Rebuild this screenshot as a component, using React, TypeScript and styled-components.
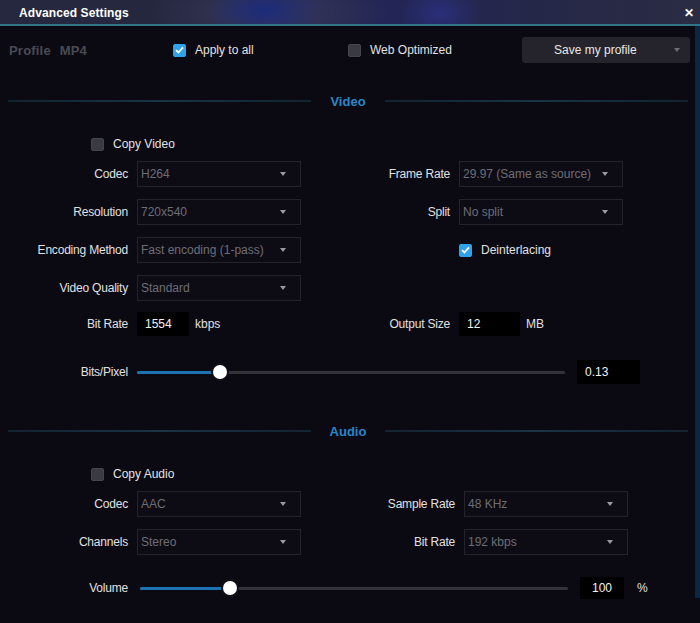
import styled, { createGlobalStyle } from 'styled-components';

const GlobalStyle = createGlobalStyle`
  html, body {
    margin: 0;
    padding: 0;
    background: #0b0a13;
  }
  * {
    box-sizing: border-box;
  }
`;

const Window = styled.div`
  width: 700px;
  height: 623px;
  display: flex;
  flex-direction: column;
  background: #0b0a13;
  font-family: "Liberation Sans", Arial, sans-serif;
  font-size: 12px;
  color: #dcdcdc;
  overflow: hidden;
`;

const TitleBar = styled.div`
  height: 26px;
  flex-shrink: 0;
  display: flex;
  align-items: center;
  justify-content: space-between;
  padding: 2px 6px 0 19px;
  border-bottom: 2px solid #2f7585;
  background:
    radial-gradient(ellipse 60px 30px at 265px 10px, #1b2a7a 0%, rgba(27, 42, 122, 0) 100%),
    radial-gradient(ellipse 120px 40px at 270px 12px, #3b3a5c 0%, rgba(59, 58, 92, 0) 100%),
    radial-gradient(ellipse 40px 30px at 440px 14px, #2a2f7a 0%, rgba(42, 47, 122, 0) 100%),
    linear-gradient(90deg, #262840 0%, #25273f 30%, #222556 55%, #262847 80%, #2a2c44 100%);
`;

const Title = styled.span`
  font-weight: bold;
  font-size: 12px;
  color: #ffffff;
  letter-spacing: 0.1px;
`;

const CloseButton = styled.span`
  font-weight: bold;
  font-size: 12px;
  color: #ffffff;
  line-height: 1;
`;

const Frame = styled.div`
  flex: 1;
  display: flex;
`;

const Content = styled.div`
  flex: 1;
  display: flex;
  flex-direction: column;
`;

const EdgeStrip = styled.div`
  width: 5px;
  margin-bottom: 25px;
  background: #0c2741;
`;

const TopBar = styled.div`
  display: flex;
  align-items: center;
  height: 26px;
  margin-top: 11px;
  padding-left: 9px;
`;

const ProfileName = styled.span`
  width: 164px;
  font-weight: bold;
  font-size: 13px;
  color: #4a4a53;
  word-spacing: 5px;
  letter-spacing: 0.2px;
`;

const CheckWrap = styled.label<{ $width?: number }>`
  display: flex;
  align-items: center;
  gap: 9px;
  width: ${p => (p.$width ? `${p.$width}px` : 'auto')};
  color: #e2e2e2;
  font-size: 12px;
`;

const Box = styled.span<{ $checked?: boolean }>`
  width: 13px;
  height: 13px;
  border-radius: 2px;
  display: inline-flex;
  align-items: center;
  justify-content: center;
  background: ${p => (p.$checked ? '#2ea3ea' : '#3a3a42')};
  border: 1px solid ${p => (p.$checked ? '#2ea3ea' : '#45454d')};
`;

const SaveButton = styled.div`
  width: 168px;
  height: 26px;
  margin-left: auto;
  margin-right: 5px;
  border-radius: 3px;
  background: #25242d;
  display: flex;
  align-items: center;
  padding: 0 10px 0 32px;
  color: #e8e8e8;
  font-size: 12px;
`;

const SaveLabel = styled.span`
  flex: 1;
`;

const Arrow = styled.span<{ $color?: string }>`
  width: 0;
  height: 0;
  border-left: 3.5px solid transparent;
  border-right: 3.5px solid transparent;
  border-top: 4px solid ${p => p.$color || '#9a9aa2'};
`;

const SectionHeader = styled.div<{ $top: number }>`
  display: flex;
  align-items: center;
  height: 20px;
  margin-top: ${p => p.$top}px;
  padding: 0 7px 0 8px;
`;

const HeaderLine = styled.span`
  flex: 1;
  height: 2px;
  background: linear-gradient(90deg, #122330 0%, #193444 50%, #122330 100%);
`;

const HeaderText = styled.span`
  margin: 0 19px;
  font-weight: bold;
  font-size: 13px;
  color: #2a86c7;
`;

const Row = styled.div<{ $top: number; $height?: number }>`
  display: flex;
  align-items: center;
  height: ${p => p.$height || 26}px;
  margin-top: ${p => p.$top}px;
`;

const Field = styled.div<{ $labelWidth: number; $width?: number }>`
  display: flex;
  align-items: center;
  width: ${p => (p.$width ? `${p.$width}px` : 'auto')};
  & > .label {
    width: ${p => p.$labelWidth}px;
    margin-right: 9px;
    text-align: right;
    color: #e0e0e0;
    white-space: nowrap;
    letter-spacing: -0.2px;
  }
`;

const Select = styled.div`
  width: 164px;
  height: 26px;
  border: 1px solid #24232c;
  background: #0d0c15;
  display: flex;
  align-items: center;
  justify-content: space-between;
  padding: 0 14px 0 3px;
  color: #6d6d75;
  font-size: 12px;
`;

const NumberBox = styled.div<{ $width: number; $height?: number; $center?: boolean }>`
  width: ${p => p.$width}px;
  height: ${p => p.$height || 24}px;
  background: #000000;
  display: flex;
  align-items: center;
  justify-content: ${p => (p.$center ? 'center' : 'flex-start')};
  padding-left: ${p => (p.$center ? 0 : 8)}px;
  color: #f2f2f2;
  font-size: 12px;
`;

const Unit = styled.span`
  margin-left: 6px;
  color: #e0e0e0;
`;

const Track = styled.div<{ $width: number; $gap: number }>`
  position: relative;
  width: ${p => p.$width}px;
  height: 3px;
  margin-left: ${p => p.$gap}px;
  margin-right: 12px;
  background: #34333b;
  border-radius: 2px;
`;

const Fill = styled.div`
  position: absolute;
  left: 0;
  top: 0;
  bottom: 0;
  background: #1d72b4;
  border-radius: 2px;
`;

const Thumb = styled.div`
  position: absolute;
  top: 50%;
  width: 14px;
  height: 14px;
  margin: -7px 0 0 -7px;
  border-radius: 50%;
  background: #ffffff;
  box-shadow: 0 0 0 2px #111018;
`;

const Percent = styled.span`
  margin-left: 13px;
  color: #e0e0e0;
`;

const Check = () => (
  <svg width="9" height="8" viewBox="0 0 9 8">
    <path d="M1 4.2 L3.4 6.5 L8 1.4" fill="none" stroke="#fff" strokeWidth="1.8" />
  </svg>
);

const CheckItem = ({ checked, label, width }: { checked?: boolean; label: string; width?: number }) => (
  <CheckWrap $width={width}>
    <Box $checked={checked}>{checked && <Check />}</Box>
    {label}
  </CheckWrap>
);

const Dropdown = ({ value }: { value: string }) => (
  <Select>
    <span>{value}</span>
    <Arrow />
  </Select>
);

const Slider = ({ pct, width, gap }: { pct: number; width: number; gap: number }) => (
  <Track $width={width} $gap={gap}>
    <Fill style={{ width: `${pct}%` }} />
    <Thumb style={{ left: `${pct}%` }} />
  </Track>
);

export default function App() {
  return (
    <Window>
      <GlobalStyle />
      <TitleBar>
        <Title>Advanced Settings</Title>
        <CloseButton>✕</CloseButton>
      </TitleBar>
      <Frame>
        <Content>
          <TopBar>
            <ProfileName>Profile MP4</ProfileName>
            <CheckItem checked label="Apply to all" width={175} />
            <CheckItem label="Web Optimized" />
            <SaveButton>
              <SaveLabel>Save my profile</SaveLabel>
              <Arrow $color="#6e6e76" />
            </SaveButton>
          </TopBar>

          <SectionHeader $top={28}>
            <HeaderLine />
            <HeaderText>Video</HeaderText>
            <HeaderLine />
          </SectionHeader>

          <Row $top={23} $height={20}>
            <Field $labelWidth={82}>
              <span className="label" />
              <CheckItem label="Copy Video" />
            </Field>
          </Row>
          <Row $top={7}>
            <Field $labelWidth={128} $width={310}>
              <span className="label">Codec</span>
              <Dropdown value="H264" />
            </Field>
            <Field $labelWidth={140}>
              <span className="label">Frame Rate</span>
              <Dropdown value="29.97 (Same as source)" />
            </Field>
          </Row>
          <Row $top={12}>
            <Field $labelWidth={128} $width={310}>
              <span className="label">Resolution</span>
              <Dropdown value="720x540" />
            </Field>
            <Field $labelWidth={140}>
              <span className="label">Split</span>
              <Dropdown value="No split" />
            </Field>
          </Row>
          <Row $top={12}>
            <Field $labelWidth={128} $width={310}>
              <span className="label">Encoding Method</span>
              <Dropdown value="Fast encoding (1-pass)" />
            </Field>
            <Field $labelWidth={140}>
              <span className="label" />
              <CheckItem checked label="Deinterlacing" />
            </Field>
          </Row>
          <Row $top={12}>
            <Field $labelWidth={128} $width={310}>
              <span className="label">Video Quality</span>
              <Dropdown value="Standard" />
            </Field>
          </Row>
          <Row $top={11} $height={24}>
            <Field $labelWidth={128} $width={310}>
              <span className="label">Bit Rate</span>
              <NumberBox $width={52}>1554</NumberBox>
              <Unit>kbps</Unit>
            </Field>
            <Field $labelWidth={140}>
              <span className="label">Output Size</span>
              <NumberBox $width={61}>12</NumberBox>
              <Unit>MB</Unit>
            </Field>
          </Row>
          <Row $top={24} $height={24}>
            <Field $labelWidth={128}>
              <span className="label">Bits/Pixel</span>
            </Field>
            <Slider pct={19.4} width={428} gap={0} />
            <NumberBox $width={63}>0.13</NumberBox>
          </Row>

          <SectionHeader $top={37}>
            <HeaderLine />
            <HeaderText>Audio</HeaderText>
            <HeaderLine />
          </SectionHeader>

          <Row $top={23} $height={20}>
            <Field $labelWidth={82}>
              <span className="label" />
              <CheckItem label="Copy Audio" />
            </Field>
          </Row>
          <Row $top={7}>
            <Field $labelWidth={128} $width={310}>
              <span className="label">Codec</span>
              <Dropdown value="AAC" />
            </Field>
            <Field $labelWidth={145}>
              <span className="label">Sample Rate</span>
              <Dropdown value="48 KHz" />
            </Field>
          </Row>
          <Row $top={12}>
            <Field $labelWidth={128} $width={310}>
              <span className="label">Channels</span>
              <Dropdown value="Stereo" />
            </Field>
            <Field $labelWidth={145}>
              <span className="label">Bit Rate</span>
              <Dropdown value="192 kbps" />
            </Field>
          </Row>
          <Row $top={22} $height={22}>
            <Field $labelWidth={128}>
              <span className="label">Volume</span>
            </Field>
            <Slider pct={21} width={428} gap={3} />
            <NumberBox $width={44} $height={22} $center>100</NumberBox>
            <Percent>%</Percent>
          </Row>
        </Content>
        <EdgeStrip />
      </Frame>
    </Window>
  );
}
